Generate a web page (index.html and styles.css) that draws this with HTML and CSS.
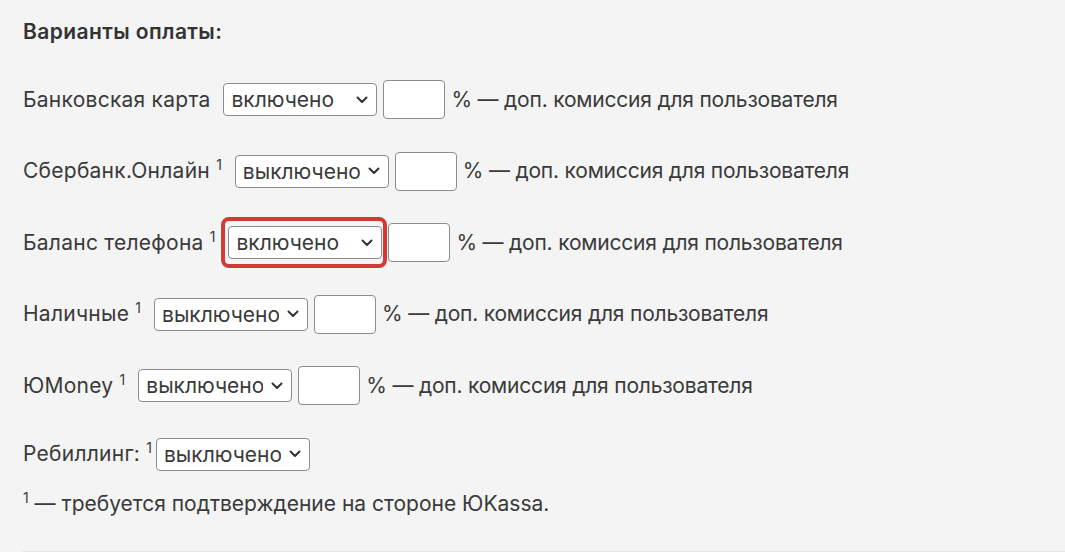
FILE: index.html
```html
<!DOCTYPE html>
<html lang="ru">
<head>
  <meta charset="UTF-8">
  <meta name="viewport" content="width=device-width, initial-scale=1.0">
  <title>Варианты оплаты</title>
  <link rel="stylesheet" href="styles.css">
</head>
<body>
  <div class="pay-settings">
    <h3 class="title">Варианты оплаты:</h3>
    <div class="rows">
      <div class="row">
        <span class="label">Банковская карта</span>
        <select class="mode">
          <option selected>включено</option>
          <option>выключено</option>
        </select>
        <input class="fee" type="text">
        <span class="hint">% — доп. комиссия для пользователя</span>
      </div>
      <div class="row">
        <span class="label">Сбербанк.Онлайн <sup>1</sup></span>
        <select class="mode">
          <option>включено</option>
          <option selected>выключено</option>
        </select>
        <input class="fee" type="text">
        <span class="hint">% — доп. комиссия для пользователя</span>
      </div>
      <div class="row">
        <span class="label">Баланс телефона <sup>1</sup></span>
        <span class="marked">
          <select class="mode">
            <option selected>включено</option>
            <option>выключено</option>
          </select>
        </span>
        <input class="fee" type="text">
        <span class="hint">% — доп. комиссия для пользователя</span>
      </div>
      <div class="row">
        <span class="label">Наличные <sup>1</sup></span>
        <select class="mode">
          <option>включено</option>
          <option selected>выключено</option>
        </select>
        <input class="fee" type="text">
        <span class="hint">% — доп. комиссия для пользователя</span>
      </div>
      <div class="row">
        <span class="label">ЮMoney <sup>1</sup></span>
        <select class="mode">
          <option>включено</option>
          <option selected>выключено</option>
        </select>
        <input class="fee" type="text">
        <span class="hint">% — доп. комиссия для пользователя</span>
      </div>
      <div class="row">
        <span class="label tight">Ребиллинг: <sup>1</sup></span>
        <select class="mode">
          <option>включено</option>
          <option selected>выключено</option>
        </select>
      </div>
    </div>
    <p class="note"><sup>1</sup> — требуется подтверждение на стороне ЮKassa.</p>
    <hr class="sep">
  </div>
</body>
</html>
```

FILE: styles.css
```css
html, body { margin: 0; padding: 0; background: #f4f4f4; }
body { font-family: Inter, "Noto Sans", sans-serif; color: #3a3a3a; font-size: 21px; overflow: hidden; }
.pay-settings { padding: 20px 0 0 23px; }
.pay-settings > .title { margin: 0 0 36px; font-size: 21px; line-height: 24px; font-weight: 600; letter-spacing: 0.4px; color: #333; }
.rows { display: flex; flex-direction: column; gap: 32.5px; }
.row { display: flex; align-items: center; line-height: 24px; }
.row > .label { margin-right: 13px; white-space: nowrap; letter-spacing: 0.25px; }
.row > .label.tight { margin-right: 4px; }
.row sup, .note sup { font-size: 14px; line-height: 0; vertical-align: 8px; letter-spacing: 0; }
.mode { appearance: none; -webkit-appearance: none; font-family: inherit; font-size: 21px; color: #3a3a3a; height: 33px; width: 154px; background: #fff url("data:image/svg+xml,%3Csvg xmlns='http://www.w3.org/2000/svg' width='12' height='8' viewBox='0 0 12 8'%3E%3Cpath d='M1.5 1.5 6 6l4.5-4.5' fill='none' stroke='%23333' stroke-width='2' stroke-linecap='round' stroke-linejoin='round'/%3E%3C/svg%3E") no-repeat right 8px center; border: 1px solid #8c8c8c; border-radius: 4px; padding: 0 28px 0 7px; margin: 0; }
.marked { position: relative; display: inline-flex; }
.marked::after { content: ""; position: absolute; top: -9px; bottom: -9px; left: -7px; right: -5px; border: 4px solid #d33a35; border-radius: 8px; pointer-events: none; }
.fee { box-sizing: border-box; width: 62px; height: 39px; margin: 0 6px; border: 1px solid #8c8c8c; border-radius: 4px; background: #fff; padding: 0 6px; font-family: inherit; font-size: 21px; }
.row > .hint { white-space: nowrap; letter-spacing: -0.2px; }
.note { margin: 18px 0 0; line-height: 30px; }
.sep { margin: 32px 0 0 -1px; border: 0; border-top: 1px solid #e6e6e6; border-bottom: 1px solid #d6d6d6; }
```
